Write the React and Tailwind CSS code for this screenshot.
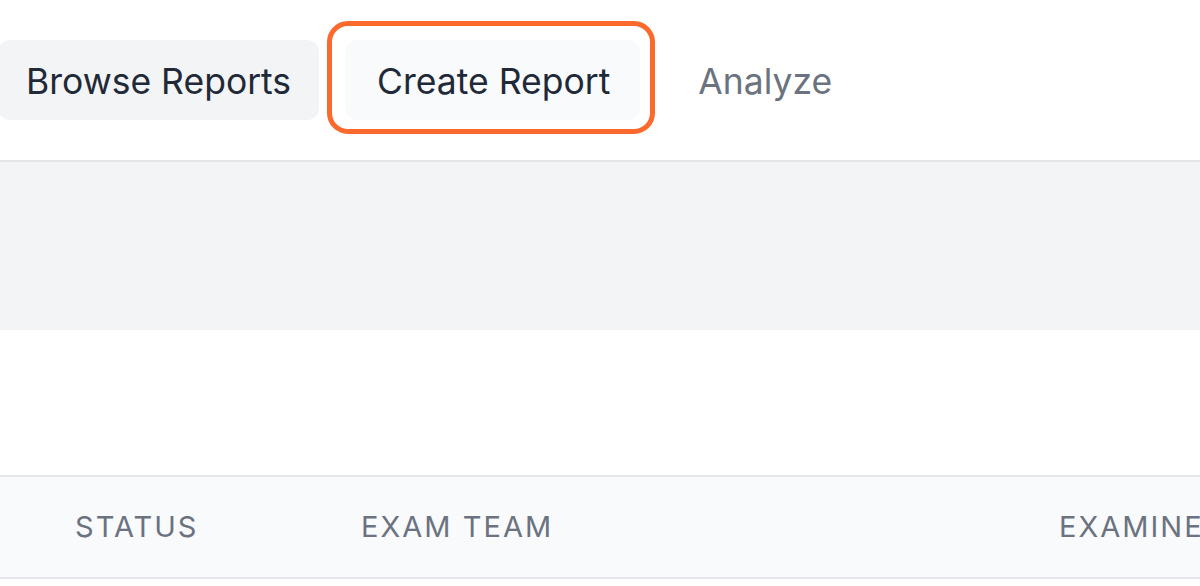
import React from 'react';

const NAV = [
  { key: 'browse', label: 'Browse Reports', className: 'bg-[#f3f4f6] text-[#1f2937] -ml-[2px] px-[28px]' },
  { key: 'create', label: 'Create Report', className: 'bg-[#f9fafb] text-[#1f2937] pl-[32px] pr-[30px]', highlight: true },
  { key: 'analyze', label: 'Analyze', className: 'text-[#6b7280] px-[32px]' },
];

const COLUMNS = [
  { key: 'status', label: 'STATUS', width: 'w-[286px]' },
  { key: 'team', label: 'EXAM TEAM', width: 'w-[698px]' },
  { key: 'examiner', label: 'EXAMINER', width: 'w-[300px]' },
];

const App = () => {
  return (
    <div className="w-[1200px] h-[586px] overflow-hidden bg-white font-['Inter','Liberation_Sans',sans-serif]">
      {/* Top nav */}
      <div className="h-[162px] border-b-2 border-[#e3e5e8] flex items-center">
        <nav className="flex items-center gap-[26px]">
          {NAV.map(item => (
            <div key={item.key} className="relative">
              {item.highlight && (
                <div className="absolute -left-[18px] -right-[15px] -top-[19px] -bottom-[14px] rounded-[21px] border-[5px] border-[#fb6a2c]" />
              )}
              <button className={`relative h-[80px] pt-[3px] rounded-[12px] text-[35.5px] font-normal leading-none ${item.className}`}>
                {item.label}
              </button>
            </div>
          ))}
        </nav>
      </div>

      {/* Filter band */}
      <div className="h-[168px] bg-[#f3f4f6]" />

      {/* Spacer */}
      <div className="h-[145px] bg-white" />

      {/* Table header */}
      <div className="h-[104px] bg-[#f9fafb] border-y-2 border-[#e5e7eb] flex items-center pl-[75px] whitespace-nowrap">
        {COLUMNS.map(col => (
          <div key={col.key} className={`${col.width} shrink-0 text-[29px] font-normal tracking-[0.07em] text-[#6b7280]`}>
            {col.label}
          </div>
        ))}
      </div>
    </div>
  );
};

export default App;
